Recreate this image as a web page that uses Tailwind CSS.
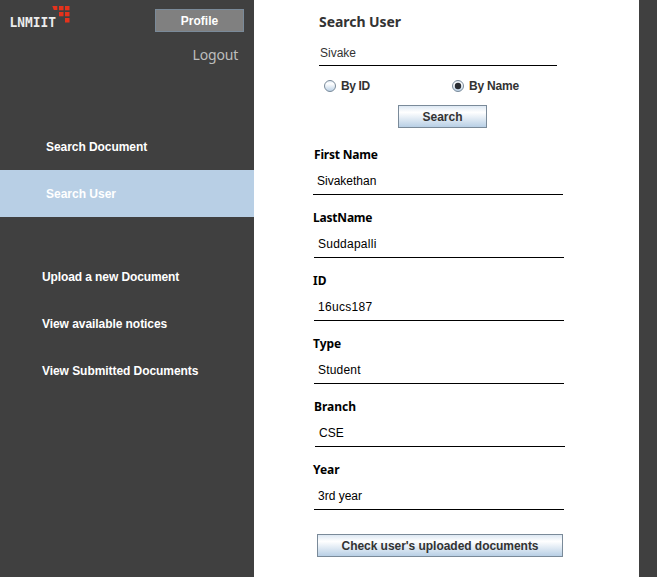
<!DOCTYPE html>
<html lang="en">
<head>
<meta charset="utf-8">
<title>Search User</title>
<script src="https://cdn.jsdelivr.net/npm/@tailwindcss/browser@4"></script>
</head>
<body class="w-[657px] h-[577px] overflow-hidden flex bg-white text-[12px] leading-[20px] whitespace-nowrap font-['Liberation_Sans',sans-serif]">
<aside class="w-[254px] h-full bg-[#404040] shrink-0 flex flex-col text-white font-bold">
  <header class="h-[34px] flex items-start justify-between pr-[10px]">
    <svg width="75" height="32" viewBox="0 0 75 32" role="img" aria-label="LNMIIT">
      <text x="9.5" y="27.3" font-family="DejaVu Sans Mono, monospace" font-size="14.5" font-weight="700" fill="#ececec" textLength="46.5" lengthAdjust="spacingAndGlyphs">LNMIIT</text>
      <g fill="#e5321c">
        <path d="M52.3 6h5v4h-3.500z"/><rect x="59" y="6" width="4.500" height="4.300"/><rect x="65" y="6" width="4.500" height="4.300"/>
        <rect x="59" y="12" width="4.500" height="4.300"/><rect x="65" y="12" width="4.500" height="4.300"/>
        <rect x="65" y="18" width="4.500" height="4.500"/>
      </g>
    </svg>
    <button class="mt-[9px] w-[89px] h-[23px] bg-[#808080] border border-[#7a8a99] flex items-center justify-center">Profile</button>
  </header>
  <a class="mt-[11px] pr-[16px] text-right text-[14px] tracking-[-0.2px] font-normal text-[#bdbdbd] font-['Noto_Sans',sans-serif]">Logout</a>
  <nav class="mt-[58px] flex flex-col">
    <a class="h-[47px] pl-[46px] flex items-center tracking-[-0.06px]">Search Document</a>
    <a class="h-[47px] pl-[46px] flex items-center bg-[#b8cfe5]">Search User</a>
  </nav>
  <nav class="mt-[36px] flex flex-col tracking-[-0.06px]">
    <a class="h-[47px] pl-[42px] flex items-center tracking-[-0.1px]">Upload a new Document</a>
    <a class="h-[47px] pl-[42px] flex items-center">View available notices</a>
    <a class="h-[47px] pl-[42px] flex items-center">View Submitted Documents</a>
  </nav>
</aside>
<main class="w-[385px] h-full shrink-0 flex flex-col">
  <h1 class="mt-[12px] ml-[65px] text-[14px] tracking-[-0.05px] font-bold text-[#333] font-['Noto_Sans',sans-serif]">Search User</h1>
  <div class="mt-[11px] ml-[65px] w-[238px] h-[23px] border-b border-black pl-[1px] text-[#333] leading-[20px]">Sivake</div>
  <div class="mt-[10px] ml-[70px] h-[20px] flex items-center text-[#333] font-bold">
    <label class="w-[128px] flex items-center gap-[5px] tracking-[-0.4px]"><svg width="12" height="12" viewBox="0 0 12 12"><defs><linearGradient id="g" x2="0" y2="1"><stop offset="0" stop-color="#dde8f3"/><stop offset=".3" stop-color="#fff"/><stop offset="1" stop-color="#b8cfe5"/></linearGradient></defs><circle cx="6" cy="6" r="5.500" fill="url(#g)" stroke="#7a8a99"/></svg>By ID</label>
    <label class="flex items-center gap-[5px] tracking-[-0.2px]"><svg width="12" height="12" viewBox="0 0 12 12"><circle cx="6" cy="6" r="5.500" fill="url(#g)" stroke="#7a8a99"/><circle cx="6" cy="6" r="3.200" fill="#292d33"/></svg>By Name</label>
  </div>
  <button class="mt-[9px] ml-[144px] w-[89px] h-[23px] border border-[#7a8a99] bg-[linear-gradient(#dde8f3_0%,#ffffff_30%,#b8cfe5_100%)] flex items-center justify-center font-bold text-[#333]">Search</button>
  <section class="mt-[17px] flex flex-col">
    <div class="h-[63px] pl-[59px]"><h2 class="pl-px h-[20px] text-[12px] tracking-[-0.2px] font-bold font-['Noto_Sans',sans-serif]">First Name</h2><p class="mt-[6px] w-[250px] h-[24px] pl-[4px] border-b border-black">Sivakethan</p></div>
    <div class="h-[63px] pl-[60px]"><h2 class="-ml-px h-[20px] text-[12px] tracking-[-0.2px] font-bold font-['Noto_Sans',sans-serif]">LastName</h2><p class="mt-[6px] w-[250px] h-[24px] pl-[4px] border-b border-black tracking-[0.25px]">Suddapalli</p></div>
    <div class="h-[63px] pl-[60px]"><h2 class="-ml-px h-[20px] text-[12px] font-bold font-['Noto_Sans',sans-serif]">ID</h2><p class="mt-[6px] w-[250px] h-[24px] pl-[4px] border-b border-black tracking-[0.3px]">16ucs187</p></div>
    <div class="h-[63px] pl-[60px]"><h2 class="-ml-px h-[20px] text-[12px] font-bold font-['Noto_Sans',sans-serif]">Type</h2><p class="mt-[6px] w-[250px] h-[24px] pl-[4px] border-b border-black tracking-[0.2px]">Student</p></div>
    <div class="h-[63px] pl-[61px]"><h2 class="-ml-px h-[20px] text-[12px] font-bold font-['Noto_Sans',sans-serif]">Branch</h2><p class="mt-[6px] w-[250px] h-[24px] pl-[4px] border-b border-black">CSE</p></div>
    <div class="h-[63px] pl-[60px]"><h2 class="-ml-px h-[20px] text-[12px] font-bold font-['Noto_Sans',sans-serif]">Year</h2><p class="mt-[6px] w-[250px] h-[24px] pl-[4px] border-b border-black">3rd year</p></div>
  </section>
  <button class="mt-[11px] ml-[63px] w-[246px] h-[23px] border border-[#7a8a99] bg-[linear-gradient(#dde8f3_0%,#ffffff_30%,#b8cfe5_100%)] flex items-center justify-center font-bold text-[#333] tracking-[-0.04px]">Check user's uploaded documents</button>
</main>
<div class="flex-1 h-full bg-[#404040]"></div>
</body>
</html>
